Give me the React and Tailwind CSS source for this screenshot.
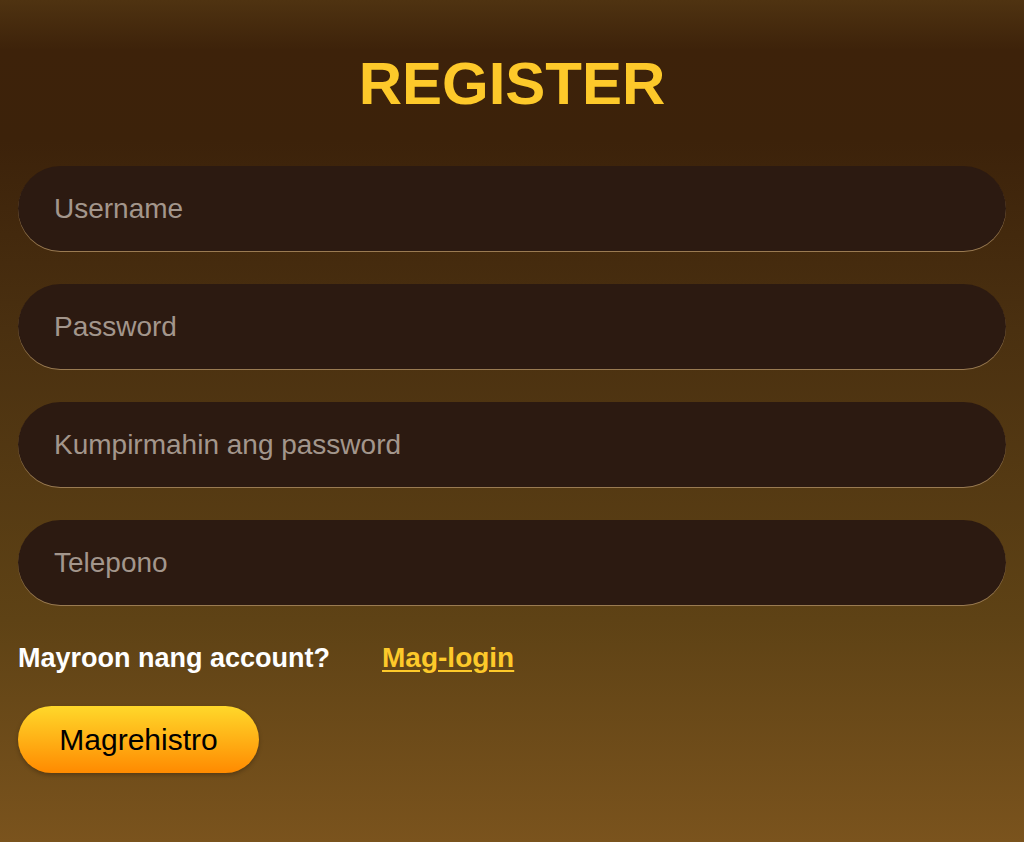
export default function App() {
  const fields = ["Username", "Password", "Kumpirmahin ang password", "Telepono"];
  return (
    <div
      className="min-h-screen w-full bg-[linear-gradient(180deg,#4f3311_0px,#3d220a_50px,#3c220a_140px,#4a3010_330px,#5e4215_620px,#7a531d_842px)] px-[18px] pt-[54px] pb-10"
      style={{ fontFamily: '"Liberation Sans", Arial, sans-serif' }}
    >
      <h1 className="text-center text-[60px] leading-[60px] font-bold text-[#fdc92a]">REGISTER</h1>

      <form className="mt-[52px] flex flex-col gap-[33px]" onSubmit={(e) => e.preventDefault()}>
        {fields.map((label) => (
          <input
            key={label}
            type={label.toLowerCase().includes("password") ? "password" : "text"}
            placeholder={label}
            className="h-[85px] w-full rounded-full bg-[#2c1a11] pl-[36px] pr-6 text-[28px] text-[#e8dccf] placeholder:text-[#a3968c] outline-none shadow-[0_1px_0_#9a7b52]"
          />
        ))}

        <div className="flex items-center gap-[52px] h-[36px] mt-[2px]">
          <span className="text-[27px] font-bold text-white">Mayroon nang account?</span>
          <a href="#" className="text-[28px] font-bold text-[#fdc92a] underline underline-offset-[3px]">
            Mag-login
          </a>
        </div>

        <div className="-mt-[3px]">
          <button
            type="submit"
            className="h-[67px] w-[241px] rounded-full bg-[linear-gradient(180deg,#ffd82a_0%,#ffb116_50%,#ff8a00_100%)] text-[30px] text-black shadow-[0_2px_4px_rgba(0,0,0,0.25)]"
          >
            Magrehistro
          </button>
        </div>
      </form>
    </div>
  );
}
